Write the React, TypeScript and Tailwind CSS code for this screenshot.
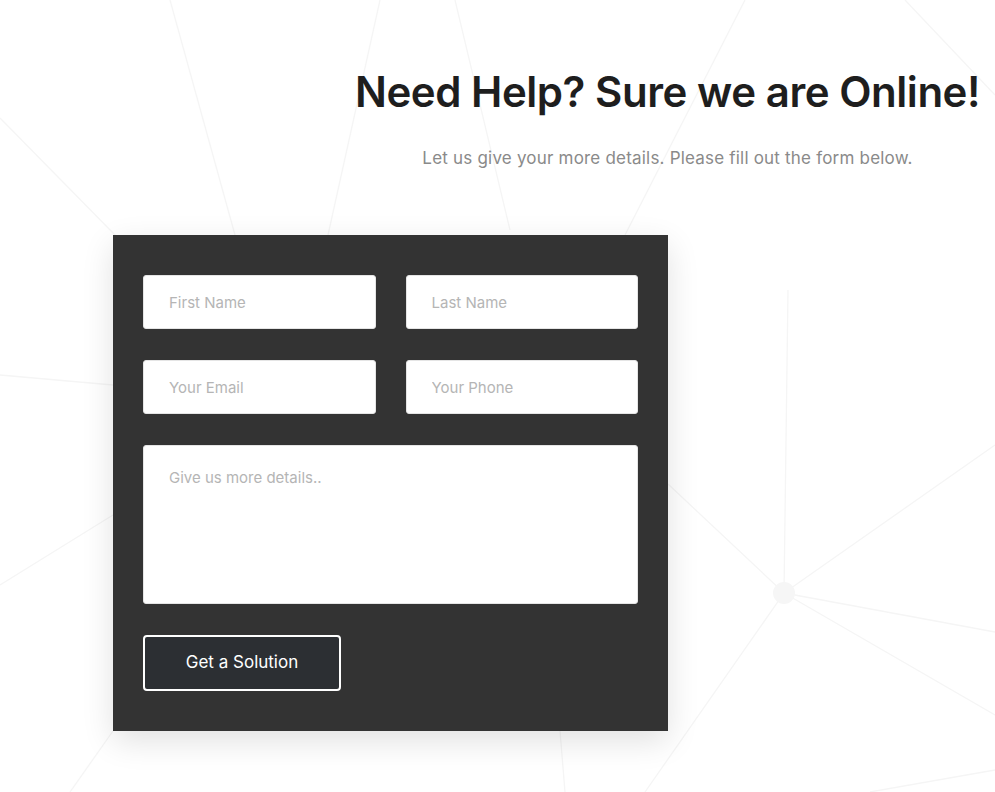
import React from "react";

const Background = () => (
  <svg className="absolute inset-0 w-full h-full pointer-events-none" viewBox="0 0 995 792" preserveAspectRatio="none">
    <g stroke="#f5f5f5" strokeWidth="1.3" fill="none">
      <line x1="0" y1="118" x2="118" y2="238" />
      <line x1="170" y1="0" x2="235" y2="235" />
      <line x1="380" y1="0" x2="328" y2="235" />
      <line x1="455" y1="0" x2="510" y2="230" />
      <line x1="745" y1="0" x2="625" y2="235" />
      <line x1="905" y1="0" x2="995" y2="95" />
      <line x1="0" y1="375" x2="113" y2="385" />
      <line x1="0" y1="585" x2="113" y2="515" />
      <line x1="668" y1="484" x2="784" y2="593" />
      <line x1="784" y1="593" x2="995" y2="445" />
      <line x1="784" y1="593" x2="995" y2="632" />
      <line x1="784" y1="593" x2="995" y2="715" />
      <line x1="784" y1="593" x2="645" y2="792" />
      <line x1="788" y1="290" x2="784" y2="593" />
      <line x1="70" y1="792" x2="113" y2="731" />
      <line x1="560" y1="731" x2="565" y2="792" />
      <line x1="870" y1="792" x2="995" y2="770" />
    </g>
    <circle cx="784" cy="593" r="11" fill="#f6f6f6" />
  </svg>
);

const inputClass =
  "w-full h-[54px] bg-white rounded-[3px] px-[25px] text-[15px] text-[#555] placeholder:text-[#b5b5b5] outline-none border border-[#e5e5e5]";

export default function App() {
  return (
    <div className="relative w-[995px] h-[792px] bg-white overflow-hidden font-['Inter','Noto_Sans',sans-serif]">
      <Background />
      <div className="relative flex flex-col">
        <div className="ml-[340px] w-[655px] flex flex-col items-center pt-[67px]">
          <h2 className="text-[42px] leading-[50px] font-semibold text-[#1e1e1e] tracking-[-0.45px]">
            Need Help? Sure we are Online!
          </h2>
          <p className="mt-[30px] text-[17px] leading-[22px] text-[#8a8a8a] tracking-[0.2px]">
            Let us give your more details. Please fill out the form below.
          </p>
        </div>
        <form className="ml-[113px] mt-[66px] w-[555px] bg-[#333333] p-[30px] pt-[40px] pb-[40px] shadow-[0_10px_30px_rgba(0,0,0,0.12)] flex flex-col">
          <div className="grid grid-cols-2 gap-x-[30px] gap-y-[31px]">
            <input className={inputClass} placeholder="First Name" />
            <input className={inputClass} placeholder="Last Name" />
            <input className={inputClass} placeholder="Your Email" />
            <input className={inputClass} placeholder="Your Phone" />
          </div>
          <textarea
            className="mt-[31px] w-full h-[159px] bg-white rounded-[3px] px-[25px] py-[21px] text-[15px] text-[#555] placeholder:text-[#b5b5b5] outline-none border border-[#e5e5e5] resize-none"
            placeholder="Give us more details.."
          />
          <button
            type="button"
            className="mt-[31px] w-[198px] h-[56px] bg-[#2c2f33] border-2 border-white rounded-[4px] text-white text-[17px]"
          >
            Get a Solution
          </button>
        </form>
      </div>
    </div>
  );
}
